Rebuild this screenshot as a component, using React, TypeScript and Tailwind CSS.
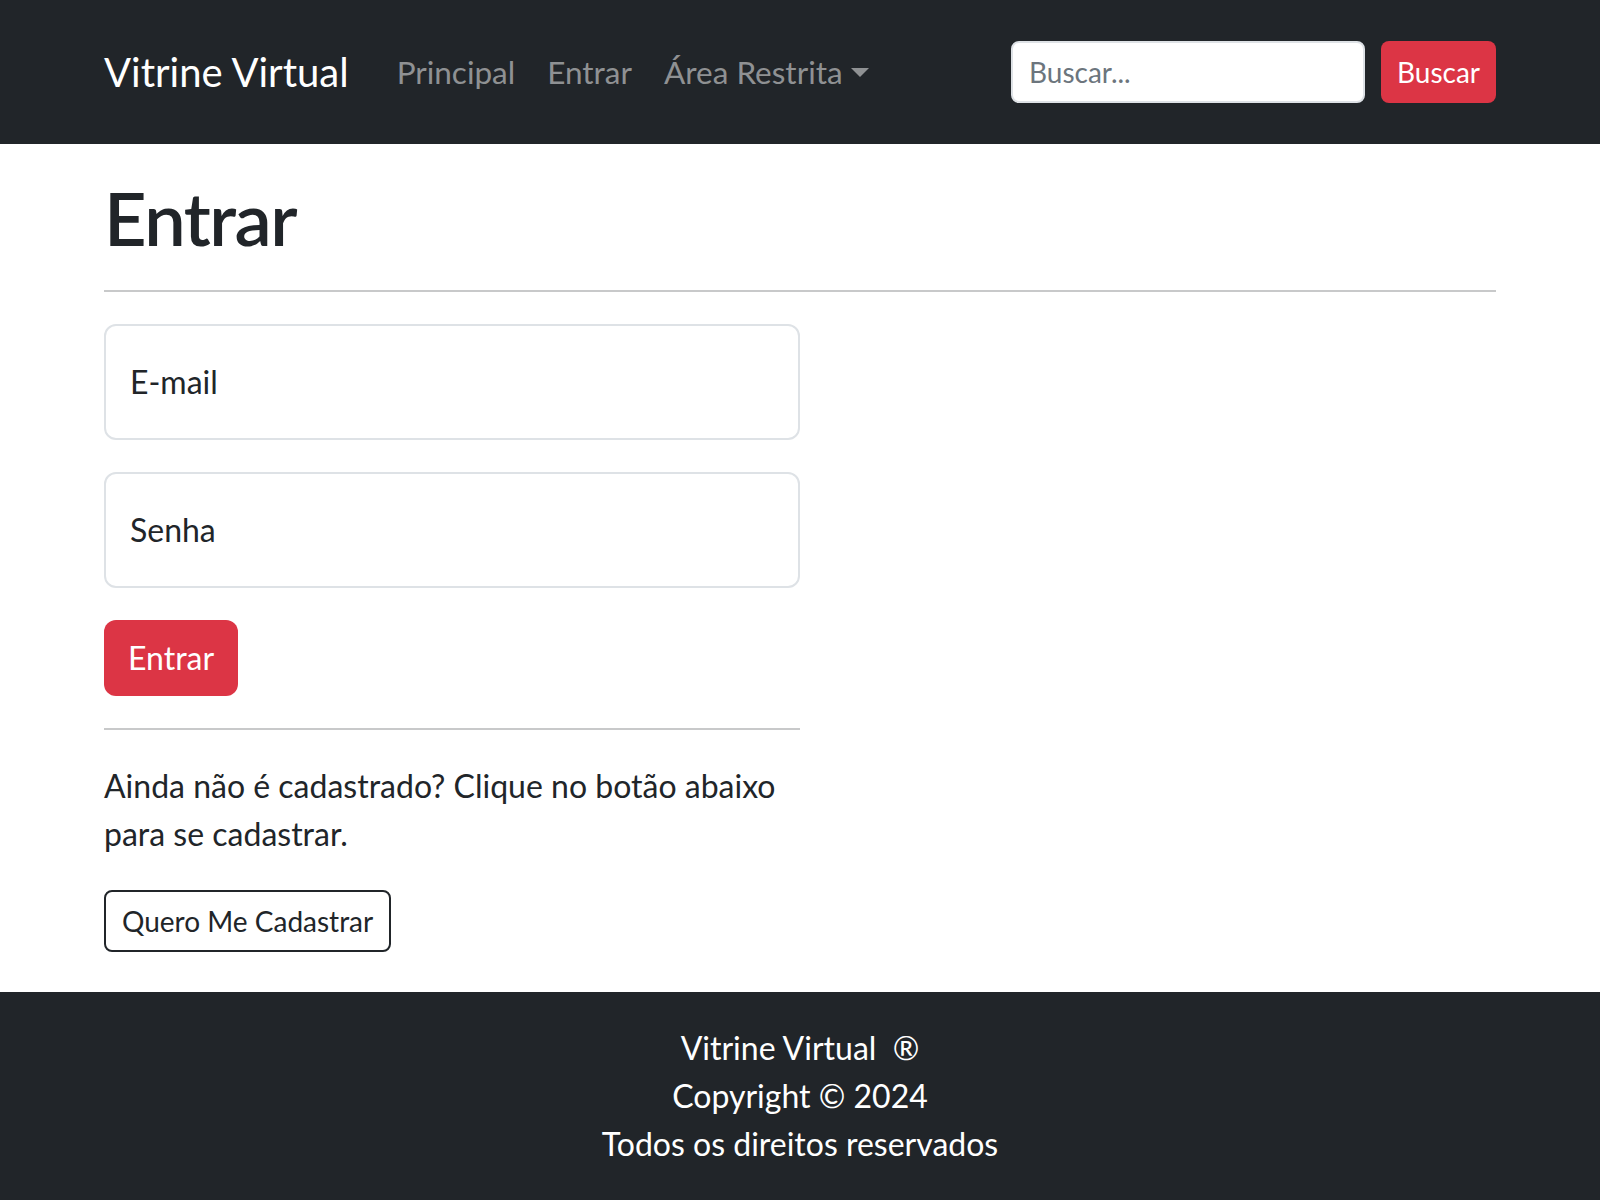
import React from "react";

export default function App() {
  return (
    <div
      className="min-h-[1200px] flex flex-col bg-white text-[#212529]"
      style={{ fontFamily: '"Segoe UI", Lato, "Noto Sans", sans-serif' }}
    >
      <nav className="bg-[#212529] h-[144px] flex items-center px-[104px]">
        <span className="text-white text-[40px] leading-[60px] mr-[32px]">Vitrine Virtual</span>
        <div className="flex items-center">
          <span className="text-[31.5px] leading-[48px] px-[16px] text-[#8f9193]">Principal</span>
          <span className="text-[31.5px] leading-[48px] px-[16px] text-[#8f9193]">Entrar</span>
          <span className="text-[31.5px] leading-[48px] px-[16px] text-[#8f9193] flex items-center">
            Área Restrita
            <span className="ml-[8px] w-0 h-0 border-l-[9.6px] border-r-[9.6px] border-t-[9.6px] border-l-transparent border-r-transparent border-t-[#8f9193]" />
          </span>
        </div>
        <form className="ml-auto flex items-center" onSubmit={(e) => e.preventDefault()}>
          <input
            placeholder="Buscar..."
            className="w-[354px] h-[62px] rounded-[8px] border-2 border-[#dee2e6] bg-white px-[16px] text-[28px] text-[#212529] placeholder:text-[#6c757d] outline-none mr-[16px]"
          />
          <button className="h-[62px] px-[16px] rounded-[8px] bg-[#dc3545] text-white text-[28px]">Buscar</button>
        </form>
      </nav>

      <main className="flex-1 px-[104px]">
        <h1 className="mt-[26px] text-[74px] leading-[96px] font-semibold tracking-[-1.5px] mb-[24px]">Entrar</h1>
        <hr className="border-0 h-[2px] bg-[#c8c9ca] mb-[32px]" />
        <div className="w-[696px]">
          <div className="h-[116px] rounded-[12px] border-2 border-[#dee2e6] flex items-center px-[24px] text-[32px] leading-[48px] mb-[32px]">
            E-mail
          </div>
          <div className="h-[116px] rounded-[12px] border-2 border-[#dee2e6] flex items-center px-[24px] text-[32px] leading-[48px] mb-[32px]">
            Senha
          </div>
          <button className="h-[76px] px-[24px] rounded-[12px] bg-[#dc3545] text-white text-[32px] leading-[48px]">
            Entrar
          </button>
          <hr className="border-0 h-[2px] bg-[#c8c9ca] mt-[32px] mb-[32px]" />
          <p className="text-[32px] leading-[48px] mb-[32px]">
            Ainda não é cadastrado? Clique no botão abaixo para se cadastrar.
          </p>
          <button className="h-[62px] px-[16px] rounded-[8px] border-2 border-[#212529] text-[28px] text-[#212529] bg-white mb-[40px]">
            Quero Me Cadastrar
          </button>
        </div>
      </main>

      <footer className="bg-[#212529] text-white text-center py-[32px] text-[32px] leading-[48px]">
        <div>Vitrine Virtual &nbsp;®</div>
        <div>Copyright © 2024</div>
        <div>Todos os direitos reservados</div>
      </footer>
    </div>
  );
}
